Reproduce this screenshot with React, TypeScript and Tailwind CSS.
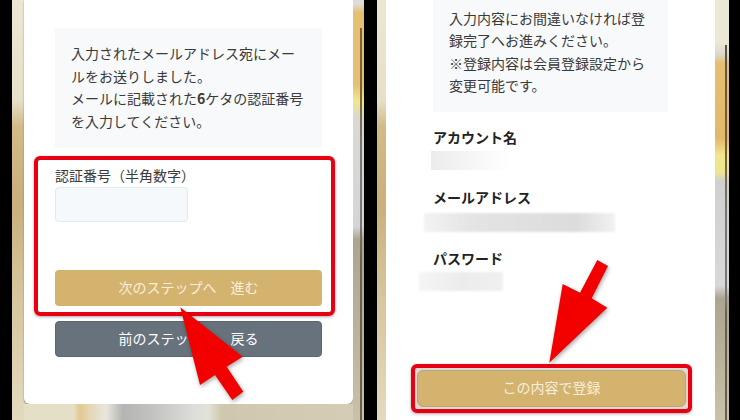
const FONT = "font-['Noto_Sans_CJK_JP','Noto_Sans',sans-serif]";

function LeftPhone() {
  return (
    <div className="relative flex h-full w-[352px] overflow-hidden">
      <div className="w-[12px] bg-[linear-gradient(180deg,#ece7d3_0%,#e6e0c8_24%,#d2bb88_30%,#c9b07c_48%,#d6c59c_70%,#e3dabf_100%)]" />

      <div className="flex w-[329px] flex-col bg-[#d8d0b8]">
        <div className="flex h-[404px] flex-col rounded-b-md bg-white px-[31px] pt-[28px] shadow-[0_1px_2px_rgba(0,0,0,0.35)]">
          <div className="flex h-[120px] flex-col justify-center bg-[#f7f9fb] px-[16px] pb-[2px] text-[14px] leading-[22.5px] text-[#3a3a3a]">
            <p>入力されたメールアドレス宛にメー</p>
            <p>ルをお送りしました。</p>
            <p>
              メールに記載された<b className="font-bold">6</b>ケタの認証番号
            </p>
            <p>を入力してください。</p>
          </div>

          <div className="mt-[8px] mr-[-13px] ml-[-21px] rounded-md border-[4px] border-[#e60012] pt-[5px] pr-[9px] pb-[6px] pl-[17px] shadow-[0_1px_3px_rgba(0,0,0,0.35)]">
            <div className="text-[14px] leading-[20px] text-[#3a3a3a]">認証番号（半角数字）</div>
            <div className="mt-[2px] h-[35px] w-[133px] rounded border border-[#e3eaf0] bg-[#f5f9fc]" />
            <div className="mt-[48px] flex h-[36px] items-center justify-center rounded bg-[#d4b36f] pb-[2px] text-[14px] whitespace-pre text-[#f6efdd]">
              次のステップへ　進む
            </div>
          </div>

          <div className="mt-[5px] flex h-[36px] items-center justify-center rounded border border-[#5c6670] bg-[#68727c] pb-[2px] text-[14px] whitespace-pre text-white">
            前のステップへ　戻る
          </div>
        </div>
        <div className="flex-1 bg-[linear-gradient(90deg,#e6dfc8_0%,#e6dfc8_15%,#e2c890_17%,#e4d8b4_20%,#e8e6de_25%,#b4b4b2_30%,#c4c4c2_40%,#dededa_52%,#e2e2da_56%,#d0c8ae_60%,#d4ccb4_100%)]" />
      </div>

      <div className="relative w-[11px] bg-[linear-gradient(180deg,#dcdcd8_0%,#dcdcd8_1%,#e5bf72_3%,#e5bf72_20%,#f1e68f_24%,#d8d8d4_28%,#d5d5d5_54%,#aba48f_57%,#c9c1a9_100%)]">
        <div className="absolute top-[28px] left-[7px] h-[392px] w-[1.5px] bg-[linear-gradient(180deg,#7a6238_0%,#7a6238_20%,#777777_30%,#777777_50%,#6a5f48_60%,#6a5f48_100%)]" />
      </div>

      <svg className="absolute top-0 left-0 drop-shadow-[1px_2px_2px_rgba(0,0,0,0.35)]" width="352" height="420" viewBox="12 0 352 420">
        <polygon
          points="180.3,307.3 242.7,356.7 226.7,366.7 243.3,391.7 232.3,400 215,375 200,385"
          fill="#f20000"
        />
      </svg>
    </div>
  );
}

function RightPhone() {
  return (
    <div className="relative flex h-full w-[352px] overflow-hidden">
      <div className="w-[9px] bg-[linear-gradient(180deg,#ece7d3_0%,#e6e0c8_24%,#d2bb88_30%,#c9b07c_48%,#d6c59c_70%,#e3dabf_100%)]" />

      <div className="flex h-full w-[329px] flex-col bg-white pl-[47px]">
        <div className="flex h-[112px] w-[235px] flex-col bg-[#f7f9fb] px-[16px] pt-[7px] text-[14px] leading-[22.3px] text-[#3a3a3a]">
          <p>入力内容にお間違いなければ登</p>
          <p>録完了へお進みください。</p>
          <p>※登録内容は会員登録設定から</p>
          <p>変更可能です。</p>
        </div>

        <div className="mt-[15px] text-[14px] leading-[20px] font-bold text-[#222]">アカウント名</div>
        <div className="mt-[4px] ml-[-2px] h-[19px] w-[81px] bg-[linear-gradient(90deg,#ececec,#f6f6f6_50%,#ffffff)]" />

        <div className="mt-[17px] text-[14px] leading-[20px] font-bold text-[#222]">メールアドレス</div>
        <div className="mt-[6px] ml-[-9px] h-[19px] w-[191px] bg-[linear-gradient(90deg,#f3f3f3,#e4e4e4_25%,#dcdcdc_80%,#f2f2f2)] blur-[1px]" />

        <div className="mt-[16px] text-[14px] leading-[20px] font-bold text-[#222]">パスワード</div>
        <div className="mt-[4px] ml-[-14px] h-[19px] w-[84px] bg-[linear-gradient(90deg,#f5f5f5,#ececec_50%,#f0f0f0)] blur-[1px]" />

        <div className="mt-[73px] ml-[-22px] w-[281px] rounded-md border-[4px] border-[#e60012] bg-[#dcdad4] p-[2px] shadow-[0_1px_3px_rgba(0,0,0,0.35)]">
          <div className="flex h-[37px] items-center justify-center rounded-md border border-[#b9a67c] bg-[#d4b36f] pb-[2px] text-[14px] text-[#f6efdd]">
            この内容で登録
          </div>
        </div>
      </div>

      <div className="relative w-[14px] bg-[linear-gradient(180deg,#ece8d6_0%,#ece8d6_10%,#dcd8cc_13%,#e5bf72_15%,#e2b96c_33%,#f1e68f_37%,#efe58c_41%,#d0d0d0_43%,#d8d8d8_68%,#aba48f_71%,#c9c1a9_100%)]">
        <div className="absolute top-[45px] left-[10px] h-[375px] w-[1.5px] bg-[linear-gradient(180deg,#5e5648_0%,#7a6238_30%,#777777_45%,#777777_68%,#6a5f48_72%,#6a5f48_100%)]" />
      </div>

      <svg className="absolute top-0 left-0 drop-shadow-[1px_2px_2px_rgba(0,0,0,0.35)]" width="352" height="420" viewBox="377 0 352 420">
        <polygon
          points="549.3,362.7 562.7,284 580,292.7 597.3,260 608,266 591.7,298.3 607.3,307.7"
          fill="#f20000"
        />
      </svg>
    </div>
  );
}

export default function App() {
  return (
    <div className={`flex h-[420px] w-[740px] justify-between overflow-hidden bg-black pr-[11px] pl-[12px] ${FONT}`}>
      <LeftPhone />
      <RightPhone />
    </div>
  );
}
